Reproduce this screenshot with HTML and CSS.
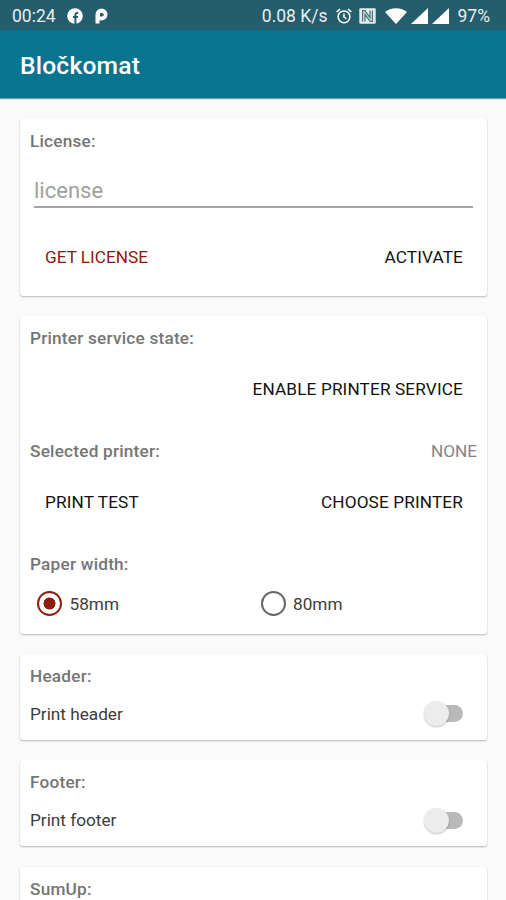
FILE: index.html
```html
<!DOCTYPE html>
<html lang="en">
<head>
    <meta charset="UTF-8">
    <meta name="viewport" content="width=device-width, initial-scale=1.0">
    <title>Bločkomat</title>
    <link rel="stylesheet" href="styles.css">
</head>
<body>
    <div class="status-bar">
        <span class="time">00:24</span>
        <svg class="icon-facebook" width="16" height="16" viewBox="0 0 16 16">
            <circle cx="8" cy="8" r="7.8" fill="#fff"/>
            <path d="M8.4 16V6.8Q8.4 4.6 11.2 4.8M6 9H11" fill="none" stroke="#245d6c" stroke-width="2"/>
        </svg>
        <svg class="icon-p" width="13" height="16" viewBox="0 0 13 16">
            <path d="M0.5 15.5V6.5A6 6 0 1 1 6.5 12.5L4.5 12.3V15.5Z" fill="#fff"/>
            <path d="M5 8.5V5H7A1.7 1.7 0 0 1 7 8.5Z" fill="#245d6c"/>
        </svg>
        <span class="speed">0.08 K/s</span>
        <svg class="icon-alarm" width="16" height="16" viewBox="0 0 16 16" fill="none" stroke="#fff" stroke-width="1.5">
            <circle cx="8" cy="8.8" r="5.9"/>
            <path d="M8 5.6V9L10.4 10.6M0.6 4L4 1.2M15.4 4L12 1.2"/>
        </svg>
        <svg class="icon-nfc" width="17" height="16" viewBox="0 0 17 16">
            <rect x="0.3" y="0.3" width="16.4" height="15.4" rx="1" fill="#e3ebed"/>
            <path d="M3.6 13.5V2.6H5.8L11 9.6V2.6M13.4 2.5V13.4H11.2L6 6.4V13.4" fill="none" stroke="#42707d" stroke-width="1.2"/>
        </svg>
        <svg class="icon-wifi" width="22" height="16" viewBox="0 0 22 16">
            <path d="M11 16L0 4Q4.5 0.2 11 0.2T22 4Z" fill="#fff"/>
        </svg>
        <svg class="icon-signal" width="17" height="16" viewBox="0 0 17 16">
            <path d="M0 16L17 0V16Z" fill="#fff"/>
        </svg>
        <svg class="icon-signal" width="17" height="16" viewBox="0 0 17 16">
            <path d="M0 16L17 0V16Z" fill="#fff"/>
        </svg>
        <span class="battery">97%</span>
    </div>

    <header class="app-bar">
        <h1>Bločkomat</h1>
    </header>

    <main class="content">
        <section class="card license-card">
            <h2>License:</h2>
            <input type="text" class="license-input" placeholder="license">
            <div class="buttons">
                <button class="accent">GET LICENSE</button>
                <button>ACTIVATE</button>
            </div>
        </section>

        <section class="card printer-card">
            <h2>Printer service state:</h2>
            <div class="buttons service-buttons">
                <button>ENABLE PRINTER SERVICE</button>
            </div>
            <div class="row">
                <h2>Selected printer:</h2>
                <span class="printer-name">NONE</span>
            </div>
            <div class="buttons printer-buttons">
                <button>PRINT TEST</button>
                <button>CHOOSE PRINTER</button>
            </div>
            <h2>Paper width:</h2>
            <div class="radios">
                <label><input type="radio" name="paper" checked>58mm</label>
                <label><input type="radio" name="paper">80mm</label>
            </div>
        </section>

        <section class="card">
            <h2>Header:</h2>
            <label class="row switch-row">
                <span>Print header</span>
                <input type="checkbox" class="switch">
            </label>
        </section>

        <section class="card">
            <h2>Footer:</h2>
            <label class="row switch-row">
                <span>Print footer</span>
                <input type="checkbox" class="switch">
            </label>
        </section>

        <section class="card sumup-card">
            <h2>SumUp:</h2>
        </section>
    </main>
</body>
</html>
```
FILE: styles.css
```css
* {
    box-sizing: border-box;
}

body {
    font-family: Roboto, sans-serif;
    font-size: 17.2px;
    background-color: #fafafa;
    color: #3c3c3c;
    height: 100vh;
    margin: 0;
    display: flex;
    flex-direction: column;
    overflow: hidden;
}

.status-bar {
    display: flex;
    align-items: center;
    flex-shrink: 0;
    height: 30px;
    padding: 2px 16px 0 12px;
    background-color: #245d6c;
    color: #e8eff1;
    font-size: 17.5px;
}

.status-bar svg {
    flex-shrink: 0;
}

.icon-facebook {
    margin-left: 11px;
}

.icon-p {
    margin-left: 12px;
}

.speed {
    margin-left: auto;
}

.icon-alarm {
    margin-left: 8px;
}

.icon-nfc {
    margin-left: 7px;
    margin-right: 1px;
}

.icon-wifi {
    margin-left: 8px;
    margin-right: 1px;
}

.icon-signal {
    margin-left: 3px;
    margin-right: 1px;
}

.battery {
    margin-left: 8px;
}

.app-bar {
    display: flex;
    align-items: center;
    flex-shrink: 0;
    height: 68px;
    padding: 2px 20px 0;
    background-color: #07758f;
    color: #fff;
    box-shadow: 0 1px 1px rgba(0, 60, 80, 0.5);
}

.app-bar h1 {
    margin: 0;
    font-size: 24.6px;
    font-weight: 500;
    letter-spacing: 0.2px;
}

.content {
    display: flex;
    flex-direction: column;
    flex: 1;
    min-height: 0;
    gap: 20.4px;
    padding: 20px 19px 0 20px;
}

.card {
    height: 86px;
    flex-shrink: 0;
    padding: 11px 10px 0;
    background-color: #fff;
    border-radius: 3px;
    box-shadow: 0 1px 2px rgba(0, 0, 0, 0.27);
}

.card h2 {
    margin: 0;
    font-size: 17.2px;
    font-weight: 500;
    line-height: 22px;
    letter-spacing: 0.22px;
    color: #757575;
}

.license-card {
    height: 178px;
    padding-top: 12px;
}

.printer-card {
    height: 317.2px;
}

.sumup-card {
    flex: 1;
    height: auto;
    min-height: 0;
    border-radius: 3px 3px 0 0;
}

.license-input {
    display: block;
    width: 439px;
    height: 37px;
    margin: 19px 0 27px 4px;
    padding: 3px 0 0;
    border: none;
    border-bottom: 2px solid #a6a6a6;
    background: none;
    font-family: inherit;
    font-size: 22px;
    outline: none;
}

.license-input::placeholder {
    color: #a0a0a0;
}

.row {
    display: flex;
    justify-content: space-between;
    align-items: center;
}

.buttons {
    display: flex;
    justify-content: space-between;
    height: 44px;
}

.buttons button {
    padding: 0 14px 0 15px;
    border: none;
    background: none;
    color: #111;
    font-family: inherit;
    font-size: 17.2px;
    letter-spacing: 0.14px;
    cursor: pointer;
}

.buttons .accent {
    color: #8b1a10;
    letter-spacing: 0;
}

.service-buttons {
    justify-content: flex-end;
    margin: 18px 0 29px;
}

.printer-buttons {
    margin: 18px 0 29px;
}

.printer-name {
    line-height: 22px;
    color: #858585;
}

.radios {
    display: flex;
    margin: 17px 0 0 7px;
}

.radios label {
    display: flex;
    align-items: center;
    flex-shrink: 0;
    width: 223.5px;
    height: 23px;
}

.radios label:last-child {
    width: auto;
}

.radios input {
    appearance: none;
    width: 25px;
    height: 25px;
    margin: 0 7.5px 0 0;
    border: 2px solid #666;
    border-radius: 50%;
}

.radios input:checked {
    border-color: #8f1d0e;
    background: radial-gradient(circle, #8f1d0e 5.7px, transparent 6.3px);
}

.switch-row {
    height: 26px;
    margin-top: 14px;
    padding-right: 14px;
}

.switch {
    appearance: none;
    position: relative;
    width: 34px;
    height: 17px;
    margin: 0;
    border-radius: 9px;
    background-color: #b9b9b9;
}

/* thumb */
.switch::before {
    content: "";
    position: absolute;
    top: -4px;
    left: -5px;
    width: 25px;
    height: 25px;
    border-radius: 50%;
    background-color: #ececec;
    box-shadow: 0 1px 2px rgba(0, 0, 0, 0.25);
}
```
